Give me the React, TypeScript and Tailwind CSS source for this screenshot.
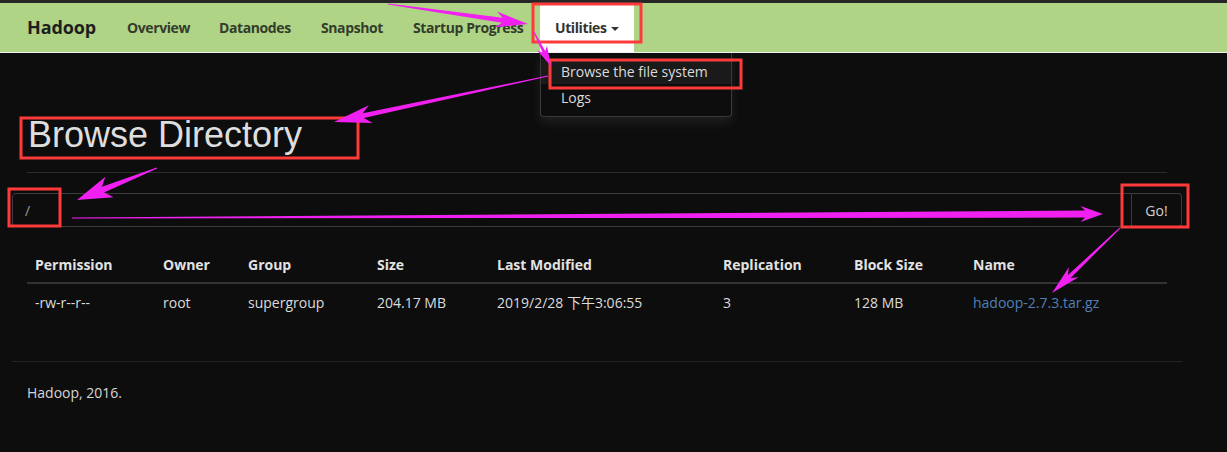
import React from "react";

const navLinks = [
  { label: "Overview", w: "w-[92px]" },
  { label: "Datanodes", w: "w-[102px]" },
  { label: "Snapshot", w: "w-[92px]" },
  { label: "Startup Progress", w: "w-[142px]" },
];

const columns = ["Permission", "Owner", "Group", "Size", "Last Modified", "Replication", "Block Size", "Name"];
const colWidths = ["w-[128px]", "w-[85px]", "w-[129px]", "w-[120px]", "w-[226px]", "w-[131px]", "w-[119px]", ""];

const row = ["-rw-r--r--", "root", "supergroup", "204.17 MB", "2019/2/28 下午3:06:55", "3", "128 MB"];

// tapered annotation arrow, thin at the tail, with a notched head
function arrowPoints(x1: number, y1: number, x2: number, y2: number, shaft: number, headLen: number, headW: number) {
  const dx = x2 - x1;
  const dy = y2 - y1;
  const len = Math.hypot(dx, dy);
  const ux = dx / len;
  const uy = dy / len;
  const nx = -uy;
  const ny = ux;
  const bx = x2 - ux * headLen;
  const by = y2 - uy * headLen;
  const notch = headLen * 0.25;
  const pts = [
    [x1 + nx * 0.5, y1 + ny * 0.5],
    [bx + nx * (shaft / 2), by + ny * (shaft / 2)],
    [bx - ux * notch + nx * (headW / 2), by - uy * notch + ny * (headW / 2)],
    [x2, y2],
    [bx - ux * notch - nx * (headW / 2), by - uy * notch - ny * (headW / 2)],
    [bx - nx * (shaft / 2), by - ny * (shaft / 2)],
    [x1 - nx * 0.5, y1 - ny * 0.5],
  ];
  return pts.map((p) => p[0].toFixed(1) + "," + p[1].toFixed(1)).join(" ");
}

const arrows = [
  [388, 4, 528, 24, 5, 26, 16],
  [533, 30, 551, 66, 3, 16, 11],
  [548, 76, 334, 122, 5, 30, 18],
  [157, 168, 77, 200, 6, 28, 22],
  [72, 218, 1103, 214, 7, 18, 16],
  [1120, 228, 1052, 293, 4, 24, 14],
];

const boxes = [
  [533, 4, 108, 38],
  [550, 60, 191, 28],
  [21, 118, 337, 40],
  [9, 189, 51, 37],
  [1122, 185, 66, 42],
];

function Annotations() {
  return (
    <svg className="absolute left-0 top-0 pointer-events-none" width="1227" height="452" viewBox="0 0 1227 452">
      {boxes.map(([x, y, w, h], i) => (
        <rect key={i} x={x} y={y} width={w} height={h} fill="none" stroke="#ff3a3a" strokeWidth="3" />
      ))}
      {arrows.map((a, i) => (
        <polygon key={i} points={arrowPoints(a[0], a[1], a[2], a[3], a[4], a[5], a[6])} fill="#f020f0" />
      ))}
    </svg>
  );
}

export default function App() {
  return (
    <div className="relative min-h-[452px] bg-[#0d0d0d] text-[14px] text-[#dcdcdc] font-['Open_Sans','Noto_Sans_CJK_SC',sans-serif]">
      <div className="h-[3px] bg-[#262626]" />
      <nav className="flex h-[50px] items-stretch bg-[#afd485] pl-[12px] border-b border-[#f2f2f2]">
        <div className="flex w-[100px] items-center px-[15px] text-[18px] font-bold tracking-[-0.1px] text-[#1e1e1e]">Hadoop</div>
        {navLinks.map((l) => (
          <div key={l.label} className={`flex ${l.w} items-center whitespace-nowrap px-[15px] font-bold tracking-[-0.4px] text-[#343c2c]`}>{l.label}</div>
        ))}
        <div className="relative flex w-[94px] items-center whitespace-nowrap bg-white px-[15px] font-bold tracking-[-0.4px] text-[#333]">
          Utilities
          <span className="ml-[5px] mt-[2px] h-0 w-0 border-x-[4px] border-t-[4px] border-x-transparent border-t-[#333]" />
          <div className="absolute left-0 top-[50px] w-[192px] rounded-b-[4px] border border-t-0 border-[#3a3a3a] bg-[#0d0d0d] pt-[6px] pb-[7px] font-normal tracking-normal text-[#dcdcdc] shadow-[0_6px_12px_rgba(255,255,255,0.08)]">
            <div className="h-[25px] bg-[#1a1a1a] px-[20px] leading-[25px]">Browse the file system</div>
            <div className="h-[25px] px-[20px] leading-[27px]">Logs</div>
          </div>
        </div>
      </nav>

      <div className="ml-[12px] w-[1170px]">
        <div className="mx-[15px] mt-[62px] h-[58px] border-b border-[#2b2b2b]">
          <h1 className="pl-[1px] text-[36px] leading-[40px] text-[#dedede] font-['Liberation_Sans',Arial,sans-serif]">Browse Directory</h1>
        </div>

        <div className="mt-[20px] flex h-[34px]">
          <div className="flex flex-1 items-center rounded-l-[4px] border border-[#3c3c3c] px-[12px] text-[#9a9a9a]">/</div>
          <div className="flex w-[50px] items-center justify-center rounded-r-[4px] border border-l-0 border-[#3c3c3c] text-[#cfcfcf]">Go!</div>
        </div>

        <div className="mx-[15px] mt-[19px]">
          <div className="flex h-[38px] items-center border-b-2 border-[#333] px-[8px] font-bold text-[#e2e2e2]">
            {columns.map((c, i) => (
              <div key={c} className={colWidths[i]}>{c}</div>
            ))}
          </div>
          <div className="flex h-[37px] items-center px-[8px]">
            {row.map((c, i) => (
              <div key={i} className={colWidths[i]}>{c}</div>
            ))}
            <div className="text-[#4f80b8]">hadoop-2.7.3.tar.gz</div>
          </div>
        </div>

        <div className="mt-[40px] border-t border-[#232323] px-[15px] pt-[20px] text-[#d6d6d6]">Hadoop, 2016.</div>
      </div>

      <Annotations />
    </div>
  );
}
